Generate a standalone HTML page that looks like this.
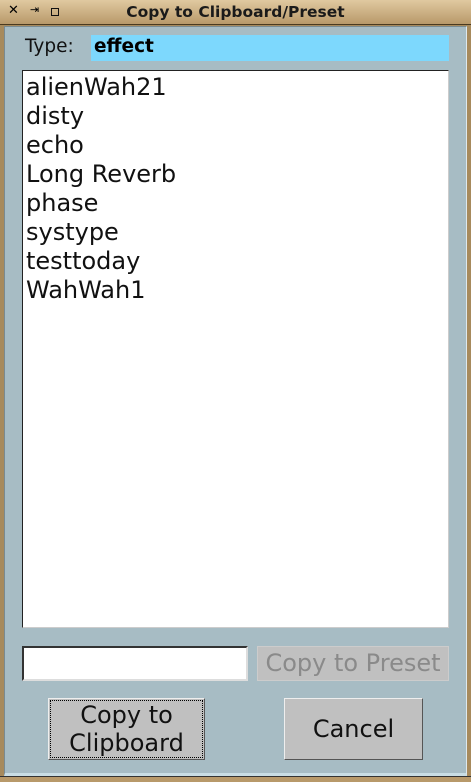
<!DOCTYPE html>
<html><head><style>
body{margin:0;width:471px;height:782px;overflow:hidden;background:#a78a5c;font-family:"DejaVu Sans","Liberation Sans",sans-serif;position:relative}
div{position:absolute;box-sizing:border-box}
#tb{left:0;top:0;width:471px;height:25px;background:linear-gradient(#e0c9a0,#b8996a);border-bottom:1px solid #4a3a20}
#tb .t{left:0;width:471px;top:3px;text-align:center;font-weight:bold;font-size:15.5px;color:#1a1a1a}
#body{left:4px;top:26px;width:463px;height:750px;background:#a7bcc4;border:1px solid #7a8a90;border-right-color:#dfe8ec;border-bottom:3px solid #c9dde4}
#bot{left:0;top:776px;width:471px;height:6px;background:#b8996a;border-top:1px solid #333}
.lbl{left:25px;top:36px;font-size:18.5px;color:#111}
#type{left:91px;top:35px;width:358px;height:26px;background:#7dd8fd;font-weight:bold;font-size:18.5px;padding:1px 0 0 3px}
#list{left:22px;top:70px;width:427px;height:558px;background:#fff;border:1px solid #222;border-right-color:#ccc;border-bottom-color:#ccc;padding:2px 0 0 3px;font-size:24px;line-height:29px;color:#111}
#entry{left:22px;top:646px;width:226px;height:35px;background:#fff;border:2px solid #333;border-right-color:#ddd;border-bottom-color:#ddd}
.btn{background:#c0c0c0;border:1px solid #eee;border-right-color:#555;border-bottom-color:#555;text-align:center;color:#111;font-size:24px}
#cp{left:257px;top:646px;width:192px;height:35px;color:#8a8a8a;line-height:33px;border-color:#ccc}
#cc{left:48px;top:698px;width:157px;height:62px;line-height:28px;padding-top:2px;outline:1px dotted #000;outline-offset:-3px}
#ca{left:284px;top:698px;width:139px;height:62px;line-height:60px}
</style></head><body>
<div id="tb"><div class="t">Copy to Clipboard/Preset</div>
<div style="left:8px;top:3px;font-size:13px;font-weight:bold">✕</div>
<div style="left:30px;top:3px;font-size:11px">⇥</div>
<div style="left:51px;top:8px;width:8px;height:8px;border:1.5px solid #111"></div>
</div>
<div id="body"></div>
<div id="bot"></div>
<div class="lbl">Type:</div>
<div id="type">effect</div>
<div id="list">alienWah21<br>disty<br>echo<br>Long Reverb<br>phase<br>systype<br>testtoday<br>WahWah1</div>
<div id="entry"></div>
<div id="cp" class="btn">Copy to Preset</div>
<div id="cc" class="btn">Copy to<br>Clipboard</div>
<div id="ca" class="btn">Cancel</div>
</body></html>
